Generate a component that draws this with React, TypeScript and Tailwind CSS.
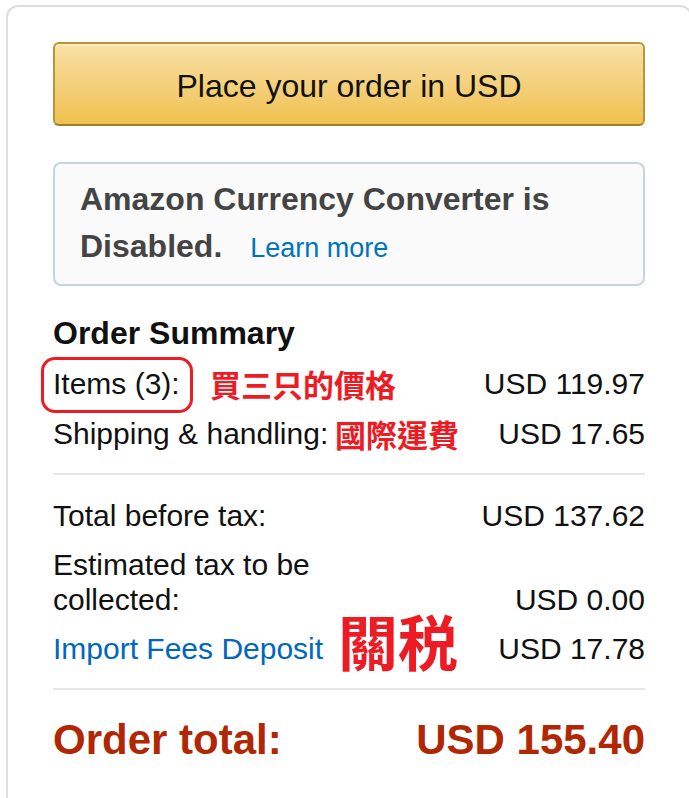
import React from 'react';

const red = 'text-[#ed1c24]';

export default function App() {
  return (
    <div className="min-h-[798px] w-[689px] overflow-hidden bg-white pl-[6px] pt-[5px] font-['Liberation_Sans',Arial,sans-serif] text-[#111]">
      <div className="w-[686px] min-h-[820px] rounded-t-[12px] border-2 border-b-0 border-[#dddddd] pl-[45px] pr-[45px] pt-[35px]">
        {/* Place order button */}
        <button className="flex h-[84px] w-full items-center justify-center rounded-[6px] border-2 border-[#b89536] border-b-[#9c7e31] bg-gradient-to-b from-[#f8e0a5] to-[#f0c14b] pt-[4px] text-[32px] leading-none text-[#111] shadow-[inset_0_2px_0_#fcebbd]">
          Place your order in USD
        </button>

        {/* Currency converter notice */}
        <div className="mt-[36px] rounded-[8px] border-2 border-[#c3d6e0] bg-[#fafafa] pb-[12px] pl-[25px] pt-[12px] text-[32px] font-bold leading-[47px] text-[#444]">
          Amazon Currency Converter is
          <br />
          Disabled.
          <a className="ml-[28px] text-[27px] font-normal text-[#0073bb]">Learn more</a>
        </div>

        {/* Summary */}
        <h2 className="mt-[27px] text-[32px] font-bold leading-[40px] text-[#111]">Order Summary</h2>

        <div className="mt-[6px] text-[30px] leading-[50px]">
          <div className="relative flex justify-between">
            <span className="relative">
              Items (3):
              <span className="absolute left-[-12px] top-[-2px] h-[56px] w-[152px] rounded-[14px] border-[3px] border-[#ed1c24]" />
            </span>
            <span className={`absolute left-[157px] top-0 font-bold ${red} font-['Noto_Sans_CJK_TC',sans-serif] text-[31px] leading-[50px]`}>
              買三只的價格
            </span>
            <span>USD 119.97</span>
          </div>
          <div className="relative flex justify-between">
            <span>Shipping &amp; handling:</span>
            <span className={`absolute left-[282px] top-0 font-bold ${red} font-['Noto_Sans_CJK_TC',sans-serif] text-[31px] leading-[50px]`}>
              國際運費
            </span>
            <span>USD 17.65</span>
          </div>
        </div>

        <div className="mt-[14px] h-[2px] bg-[#e7e7e7]" />

        <div className="mt-[16px] text-[30px]">
          <div className="flex justify-between leading-[50px]">
            <span>Total before tax:</span>
            <span>USD 137.62</span>
          </div>
          <div className="mt-[6px] flex items-end justify-between leading-[35px]">
            <span className="w-[300px]">Estimated tax to be collected:</span>
            <span>USD 0.00</span>
          </div>
          <div className="relative mt-[7px] flex justify-between leading-[50px]">
            <a className="text-[#0066c0]">Import Fees Deposit</a>
            <span className={`absolute left-[285px] top-[-19px] font-bold ${red} font-['Noto_Sans_CJK_TC',sans-serif] text-[60px] leading-[70px]`}>
              關税
            </span>
            <span>USD 17.78</span>
          </div>
        </div>

        <div className="mt-[14px] h-[2px] bg-[#e7e7e7]" />

        <div className="mt-[25px] flex justify-between text-[42px] font-bold leading-[50px] text-[#b12704]">
          <span>Order total:</span>
          <span>USD 155.40</span>
        </div>
      </div>
    </div>
  );
}
